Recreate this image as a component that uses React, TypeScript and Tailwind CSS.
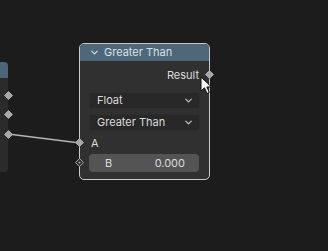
import { ChevronDown } from 'lucide-react'

function Socket({ hollow = false }: { hollow?: boolean }) {
  return (
    <svg width="9" height="9" viewBox="0 0 9 9" className="block">
      <path d="M4.5 0.5 L8.5 4.5 L4.5 8.5 L0.5 4.5 Z" fill={hollow ? '#2a2a2a' : '#a8a8a8'} stroke="#a8a8a8" strokeWidth="1" />
      {hollow && <circle cx="4.5" cy="4.5" r="1.1" fill="#a8a8a8" />}
    </svg>
  )
}

function Dropdown({ label }: { label: string }) {
  return (
    <div className="h-[17px] rounded-[3px] bg-[#282828] border border-[#2e2e2e] flex items-center justify-between pl-[7px] pr-[5px]">
      <span>{label}</span>
      <ChevronDown className="w-[11px] h-[11px] text-[#c8c8c8]" strokeWidth={2.5} />
    </div>
  )
}

export default function App() {
  return (
    <div className="relative w-[328px] h-[251px] overflow-hidden bg-[#1c1c1c] text-[11px] text-[#dcdcdc]" style={{ fontFamily: 'Inter, "DejaVu Sans", sans-serif' }}>
      {/* link wire */}
      <svg className="absolute left-0 top-0" width="328" height="251">
        <line x1="8" y1="134" x2="80" y2="143" stroke="#b4b4b4" strokeWidth="1.6" />
      </svg>

      {/* left node, mostly off canvas */}
      <div className="absolute left-[-60px] top-[62px] w-[68px] h-[110px] rounded-[4px] bg-[#2b2b2b] overflow-hidden">
        <div className="h-[16px] bg-[#4c6678]" />
      </div>
      <div className="absolute left-[4px] top-[91px]"><Socket /></div>
      <div className="absolute left-[4px] top-[110px]"><Socket /></div>
      <div className="absolute left-[4px] top-[130px]"><Socket /></div>

      {/* Greater Than node */}
      <div className="absolute left-[79px] top-[43px] w-[131px] h-[137px] rounded-[5px] border border-[#c9c9c9] bg-[#303030] flex flex-col">
        <div className="h-[17px] rounded-t-[4px] bg-[#4e6779] flex items-center gap-[4px] pl-[9px] text-[#d5e2ea]">
          <ChevronDown className="w-[11px] h-[11px]" strokeWidth={2.5} />
          <span>Greater Than</span>
        </div>
        <div className="px-[9px] flex flex-col">
          <div className="relative h-[16px] mt-[6px] flex items-center justify-end pr-[1px]">
            <span>Result</span>
            <div className="absolute right-[-14px] top-[3px]"><Socket /></div>
          </div>
          <div className="mt-[9px]"><Dropdown label="Float" /></div>
          <div className="mt-[5px]"><Dropdown label="Greater Than" /></div>
          <div className="relative h-[16px] mt-[4px] flex items-center pl-[2px]">
            <span>A</span>
            <div className="absolute left-[-14px] top-[3px]"><Socket /></div>
          </div>
          <div className="relative h-[18px] mt-[3px] mr-[1px] rounded-[4px] bg-[#545454] flex items-center justify-between pl-[16px] pr-[14px]">
            <span>B</span>
            <span>0.000</span>
            <div className="absolute left-[-14px] top-[4px]"><Socket hollow /></div>
          </div>
        </div>
      </div>

      {/* mouse cursor */}
      <svg className="absolute left-[200px] top-[76px]" width="14" height="20" viewBox="0 0 14 20">
        <path d="M1 1 L1 15 L4.5 11.8 L7 17.5 L9.3 16.5 L6.9 11 L11.5 11 Z" fill="#f4f4f4" stroke="#111" strokeWidth="1" strokeLinejoin="round" />
      </svg>
    </div>
  )
}
